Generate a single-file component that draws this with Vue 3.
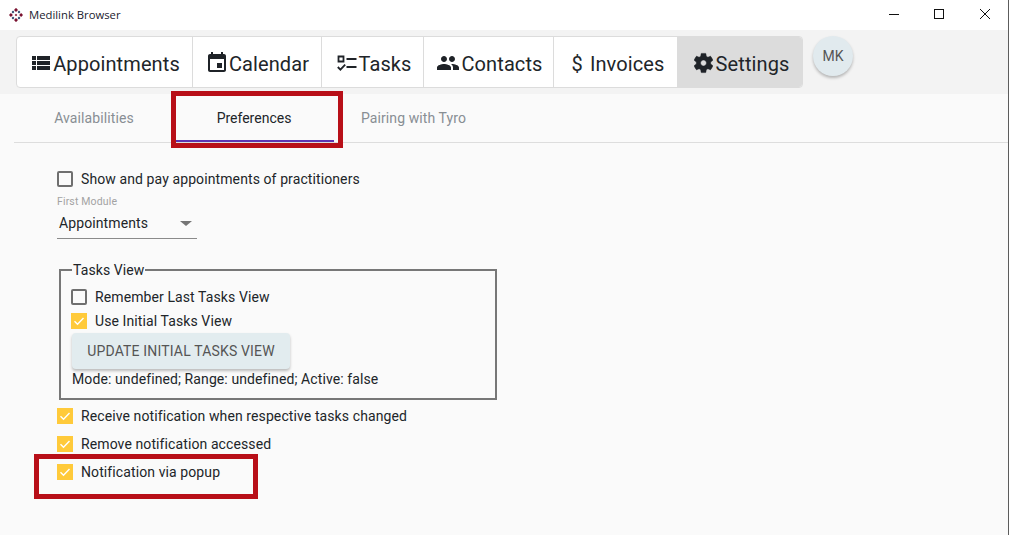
<script setup>
const navItems = [
  { key: 'appointments', label: 'Appointments', cls: 'w-appointments' },
  { key: 'calendar', label: 'Calendar', cls: 'w-calendar' },
  { key: 'tasks', label: 'Tasks', cls: 'w-tasks' },
  { key: 'contacts', label: 'Contacts', cls: 'w-contacts' },
  { key: 'invoices', label: 'Invoices', cls: 'w-invoices' },
  { key: 'settings', label: 'Settings', cls: 'w-settings', active: true },
]
const diamond = (x, y, r) => `${x},${y - r} ${x + r},${y} ${x},${y + r} ${x - r},${y}`
const logoShapes = [
  [7, 1.9, 2.0, '#7a1230'], [7, 12.1, 2.0, '#7a1230'], [1.9, 7, 2.0, '#7a1230'], [12.1, 7, 2.0, '#7a1230'],
  [4, 4, 1.4, '#1f3f66'], [10, 4, 1.4, '#1f3f66'], [4, 10, 1.4, '#1f3f66'], [10, 10, 1.4, '#1f3f66'],
  [7, 7, 1.3, '#7a1230'],
].map(([x, y, r, fill]) => ({ points: diamond(x, y, r), fill }))
</script>

<template>
  <div class="window">
    <header class="titlebar">
      <svg class="logo" viewBox="0 0 14 14" width="14" height="14">
        <polygon v-for="(s, i) in logoShapes" :key="i" :points="s.points" :fill="s.fill" />
      </svg>
      <span class="app-title">Medilink Browser</span>
      <div class="win-controls">
        <svg class="wc" width="46" height="30" viewBox="0 0 46 30"><path d="M19 14.500h10" stroke="#111" fill="none" /></svg>
        <svg class="wc" width="46" height="30" viewBox="0 0 46 30"><rect x="18.500" y="9.500" width="9" height="9" stroke="#111" fill="none" /></svg>
        <svg class="wc" width="46" height="30" viewBox="0 0 46 30"><path d="M18 9l10 10M28 9L18 19" stroke="#111" fill="none" /></svg>
      </div>
    </header>

    <div class="navband">
      <nav class="navgroup">
        <div v-for="item in navItems" :key="item.key" class="navcell" :class="[item.cls, { active: item.active }]">
          <svg v-if="item.key === 'appointments'" class="ico gap3" width="18" height="24" viewBox="0 0 18 24">
            <path d="M0 5h4v4H0zM5 5h13v4H5zM0 10h4v4H0zM5 10h13v4H5zM0 15h4v4H0zM5 15h13v4H5z" fill="#1f2328" />
          </svg>
          <svg v-else-if="item.key === 'calendar'" class="ico gap3" width="18" height="24" viewBox="3 0 18 24">
            <path d="M17 12h-5v5h5v-5zM16 1v2H8V1H6v2H5c-1.110 0-1.990.9-1.990 2L3 19c0 1.100.89 2 2 2h14c1.100 0 2-.9 2-2V5c0-1.100-.9-2-2-2h-1V1h-2zm3 18H5V8h14v11z" fill="#1f2328" />
          </svg>
          <svg v-else-if="item.key === 'tasks'" class="ico gap2" width="20" height="24" viewBox="0 0 20 24">
            <path d="M1.500 5.500h5v5h-5z" fill="none" stroke="#1f2328" stroke-width="1.800" />
            <path d="M9.500 7h10v2h-10zM9.500 15h10v2h-10z" fill="#1f2328" />
            <path d="M.8 16l2.600 2.600 4.800-5" fill="none" stroke="#1f2328" stroke-width="1.800" />
          </svg>
          <svg v-else-if="item.key === 'contacts'" class="ico gap2" width="22" height="24" viewBox="1 0 22 24">
            <path d="M16 11c1.660 0 2.990-1.340 2.990-3S17.660 5 16 5c-1.660 0-3 1.340-3 3s1.340 3 3 3zm-8 0c1.660 0 2.990-1.340 2.990-3S9.660 5 8 5C6.340 5 5 6.340 5 8s1.340 3 3 3zm0 2c-2.330 0-7 1.170-7 3.500V19h14v-2.500c0-2.330-4.670-3.500-7-3.500zm8 0c-.29 0-.62.02-.97.05 1.160.84 1.970 1.970 1.970 3.450V19h6v-2.500c0-2.330-4.670-3.500-7-3.500z" fill="#1f2328" />
          </svg>
          <span v-else-if="item.key === 'invoices'" class="dollar">$</span>
          <svg v-else class="ico gap3" width="19" height="24" viewBox="2.500 1.500 19 21">
            <path d="M19.140 12.940c.04-.3.06-.61.06-.94 0-.32-.02-.64-.07-.94l2.030-1.580c.18-.14.23-.41.12-.61l-1.920-3.320c-.12-.22-.37-.29-.59-.22l-2.390.96c-.5-.38-1.030-.7-1.620-.94l-.36-2.540c-.04-.24-.24-.41-.48-.41h-3.840c-.24 0-.43.17-.47.41l-.36 2.540c-.59.24-1.130.57-1.620.94l-2.390-.96c-.22-.08-.47 0-.59.22L2.740 8.870c-.12.21-.08.47.12.61l2.030 1.580c-.05.3-.09.63-.09.94s.02.64.07.94l-2.030 1.580c-.18.14-.23.41-.12.61l1.920 3.320c.12.22.37.29.59.22l2.390-.96c.5.38 1.030.7 1.620.94l.36 2.540c.05.24.24.41.48.41h3.840c.24 0 .44-.17.47-.41l.36-2.540c.59-.24 1.130-.56 1.620-.94l2.390.96c.22.08.47 0 .59-.22l1.920-3.320c.12-.22.07-.47-.12-.61l-2.010-1.580zM12 15c-1.650 0-3-1.350-3-3s1.350-3 3-3 3 1.350 3 3-1.350 3-3 3z" fill="#1f2328" stroke="#1f2328" stroke-width=".5" />
          </svg>
          <span class="navlabel">{{ item.label }}</span>
        </div>
      </nav>
      <div class="avatar">MK</div>
    </div>

    <main class="content">
      <div class="tabs">
        <div class="tab t-avail">Availabilities</div>
        <div class="tab t-pref">Preferences</div>
        <div class="tab t-tyro">Pairing with Tyro</div>
        <div class="mark mark-tab"></div>
      </div>

      <section class="prefs">
        <label class="check"><span class="box"></span><span>Show and pay appointments of practitioners</span></label>

        <div class="select-field">
          <div class="select-label">First Module</div>
          <div class="select-value"><span>Appointments</span><span class="caret"></span></div>
        </div>

        <fieldset class="tasks-view">
          <legend>Tasks View</legend>
          <label class="check tight"><span class="box"></span><span>Remember Last Tasks View</span></label>
          <label class="check tight">
            <span class="box on"><svg viewBox="0 0 16 16" width="16" height="16"><path d="M3.500 8.200l3 3 6-6.200" fill="none" stroke="#fff" stroke-width="1.400" /></svg></span>
            <span>Use Initial Tasks View</span>
          </label>
          <button class="update" type="button">UPDATE INITIAL TASKS VIEW</button>
          <div class="mode">Mode: undefined; Range: undefined; Active: false</div>
        </fieldset>

        <div class="after">
          <label class="check">
            <span class="box on"><svg viewBox="0 0 16 16" width="16" height="16"><path d="M3.500 8.200l3 3 6-6.200" fill="none" stroke="#fff" stroke-width="1.400" /></svg></span>
            <span>Receive notification when respective tasks changed</span>
          </label>
          <label class="check">
            <span class="box on"><svg viewBox="0 0 16 16" width="16" height="16"><path d="M3.500 8.200l3 3 6-6.200" fill="none" stroke="#fff" stroke-width="1.400" /></svg></span>
            <span>Remove notification accessed</span>
          </label>
          <label class="check">
            <span class="box on"><svg viewBox="0 0 16 16" width="16" height="16"><path d="M3.500 8.200l3 3 6-6.200" fill="none" stroke="#fff" stroke-width="1.400" /></svg></span>
            <span>Notification via popup</span>
          </label>
          <div class="mark mark-popup"></div>
        </div>
      </section>
    </main>
  </div>
</template>

<style>
html, body { margin: 0; background: #fafafa; }
</style>

<style scoped>
.window { width: 1009px; height: 535px; box-sizing: border-box; border-right: 1px solid #5c5c5c; overflow: hidden; display: flex; flex-direction: column; font-family: Roboto, "Liberation Sans", sans-serif; color: #212529; }
.titlebar { height: 30px; background: #fff; display: flex; align-items: center; padding-left: 9px; flex: none; }
.logo { flex: none; margin-top: -1px; }
.app-title { margin: -2px 0 0 6px; font: 11.3px "Open Sans", "Noto Sans", sans-serif; color: #1a1a2e; }
.win-controls { margin-left: auto; display: flex; }
.wc { display: block; }

.navband { height: 64px; background: #f3f3f3; flex: none; display: flex; padding: 6px 0 0 16px; box-sizing: border-box; }
.navgroup { height: 52px; box-sizing: border-box; display: flex; border: 1px solid #dcdcdc; border-radius: 4px; background: #fff; overflow: hidden; }
.navcell { display: flex; align-items: center; justify-content: center; box-sizing: border-box; padding: 2px 0 0 3px; border-right: 1px solid #dcdcdc; font-size: 20px; letter-spacing: .1px; color: #212529; }
.navcell:last-child { border-right: 0; }
.navcell.active { background: #dcdcdc; }
.navlabel { padding-top: 2px; }
.w-appointments { width: 176px; }
.w-calendar { width: 129px; }
.w-tasks { width: 102px; }
.w-contacts { width: 130px; }
.w-invoices { width: 124px; padding-left: 5px; }
.w-settings { width: 124px; }
.ico { flex: none; display: block; }
.gap2 { margin-right: 2px; }
.gap3 { margin-right: 3px; }
.dollar { margin-right: 7px; padding-top: 2px; }
.avatar { width: 40px; height: 40px; border-radius: 50%; background: #e1eaee; color: #555; font-size: 14px; display: flex; align-items: center; justify-content: center; margin-left: 10px; box-shadow: 0 2px 3px rgba(0,0,0,.25); }

.content { flex: 1; background: #fafafa; min-height: 0; }
.tabs { position: relative; margin-left: 14px; height: 49px; box-sizing: border-box; border-bottom: 1px solid #dddddd; display: flex; font-size: 14px; letter-spacing: .1px; color: #888e94; }
.tab { display: flex; align-items: center; justify-content: center; box-sizing: border-box; height: 48px; }
.t-avail { width: 162px; padding-right: 2px; }
.t-pref { width: 158px; color: #212529; border-bottom: 2px solid #5e35b1; padding: 2px 2px 0 0; letter-spacing: 0; }
.t-tyro { width: 160px; padding-right: 1px; }
.mark { position: absolute; border: 5px solid #b80f18; box-sizing: border-box; pointer-events: none; }
.mark-tab { left: 157px; top: -3px; width: 172px; height: 57px; }

.prefs { padding: 28px 0 0 57px; font-size: 14px; letter-spacing: .1px; }
.check { display: flex; align-items: center; height: 16px; gap: 8px; }
.box { width: 16px; height: 16px; box-sizing: border-box; border: 2px solid #6f6f6f; border-radius: 2px; flex: none; display: block; }
.box.on { background: #ffca3a; border: 0; border-radius: 0; }
.box svg { display: block; }

.select-field { width: 140px; margin-top: 9px; }
.select-label { font-size: 10.5px; letter-spacing: .15px; color: #a3a3a3; line-height: 12px; }
.select-value { height: 29px; box-sizing: border-box; border-bottom: 1px solid #8a8a8a; display: flex; align-items: center; justify-content: space-between; padding: 0 5px 2px 2px; margin-top: 2px; }
.caret { width: 0; height: 0; border-left: 6px solid transparent; border-right: 6px solid transparent; border-top: 5px solid #757575; }

.tasks-view { width: 438px; height: 138px; margin: 23px 0 0 2px; padding: 11px 0 0 10px; box-sizing: border-box; border: 2px solid #777; border-radius: 0; }
.tasks-view legend { padding: 0 1px; margin-left: 1px; font-size: 14px; line-height: 16px; }
.tight + .tight { margin-top: 8px; }
.update { display: block; margin: 4px 0 0 1px; width: 218px; height: 36px; border: 0; border-radius: 4px; background: #e2ecef; color: #555; font: 14px Roboto, sans-serif; letter-spacing: .16px; padding: 0; box-shadow: 0 2px 3px rgba(0,0,0,.25); }
.mode { margin: 1px 0 0 1px; line-height: 17px; padding-top: 1px; }

.after { position: relative; margin-top: 8px; }
.after .check + .check { margin-top: 12px; }
.mark-popup { left: -23px; top: 46px; width: 224px; height: 45px; }
</style>
